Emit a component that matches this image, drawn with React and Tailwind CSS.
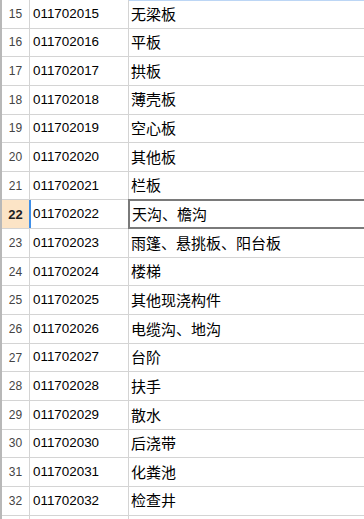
import React from "react";

const rows = [
  [15, "011702015", "无梁板"],
  [16, "011702016", "平板"],
  [17, "011702017", "拱板"],
  [18, "011702018", "薄壳板"],
  [19, "011702019", "空心板"],
  [20, "011702020", "其他板"],
  [21, "011702021", "栏板"],
  [22, "011702022", "天沟、檐沟"],
  [23, "011702023", "雨篷、悬挑板、阳台板"],
  [24, "011702024", "楼梯"],
  [25, "011702025", "其他现浇构件"],
  [26, "011702026", "电缆沟、地沟"],
  [27, "011702027", "台阶"],
  [28, "011702028", "扶手"],
  [29, "011702029", "散水"],
  [30, "011702030", "后浇带"],
  [31, "011702031", "化粪池"],
  [32, "011702032", "检查井"],
  ["", "", ""], // next row, cut off by the window
];

const App = () => {
  const active = 22;

  return (
    <div
      className="w-[364px] h-[519px] overflow-hidden bg-white border-l-2 border-[#b8b8b8]"
      style={{ fontFamily: '"Liberation Sans", Arial, sans-serif' }}
    >
      {rows.map(([num, code, name], i) => {
        const isActive = num === active;
        return (
          <div key={i} className="flex h-[28.65px] border-b border-[#d4d4d4]">
            {/* row header */}
            <div
              className={`w-[27px] shrink-0 flex items-center justify-center ${
                isActive
                  ? "bg-[#fce4c6] text-[13px] font-bold text-[#222]"
                  : "text-[12px] text-[#444]"
              }`}
            >
              {num}
            </div>
            <div
              className={`shrink-0 w-[2px] ${isActive ? "bg-[#3f8fe8]" : "bg-transparent"}`}
            >
              {!isActive && <div className="w-px h-full bg-[#d4d4d4]" />}
            </div>
            {/* code */}
            <div className="w-[98px] shrink-0 flex items-center pl-[2px] text-[13.4px] text-black border-r border-[#d4d4d4]">
              {code}
            </div>
            {/* name */}
            <div
              className={`flex-1 flex items-center pl-[2px] text-[15px] text-black ${
                i === 0 ? "border-t border-[#bcd6f5]" : ""
              } ${isActive ? "border-2 border-r-0 border-[#7a7a7a] -mt-px -ml-px h-[29.65px]" : ""}`}
              style={{ fontFamily: '"Noto Sans CJK SC", "Liberation Sans", sans-serif' }}
            >
              {name}
            </div>
          </div>
        );
      })}
    </div>
  );
};

export default App;
